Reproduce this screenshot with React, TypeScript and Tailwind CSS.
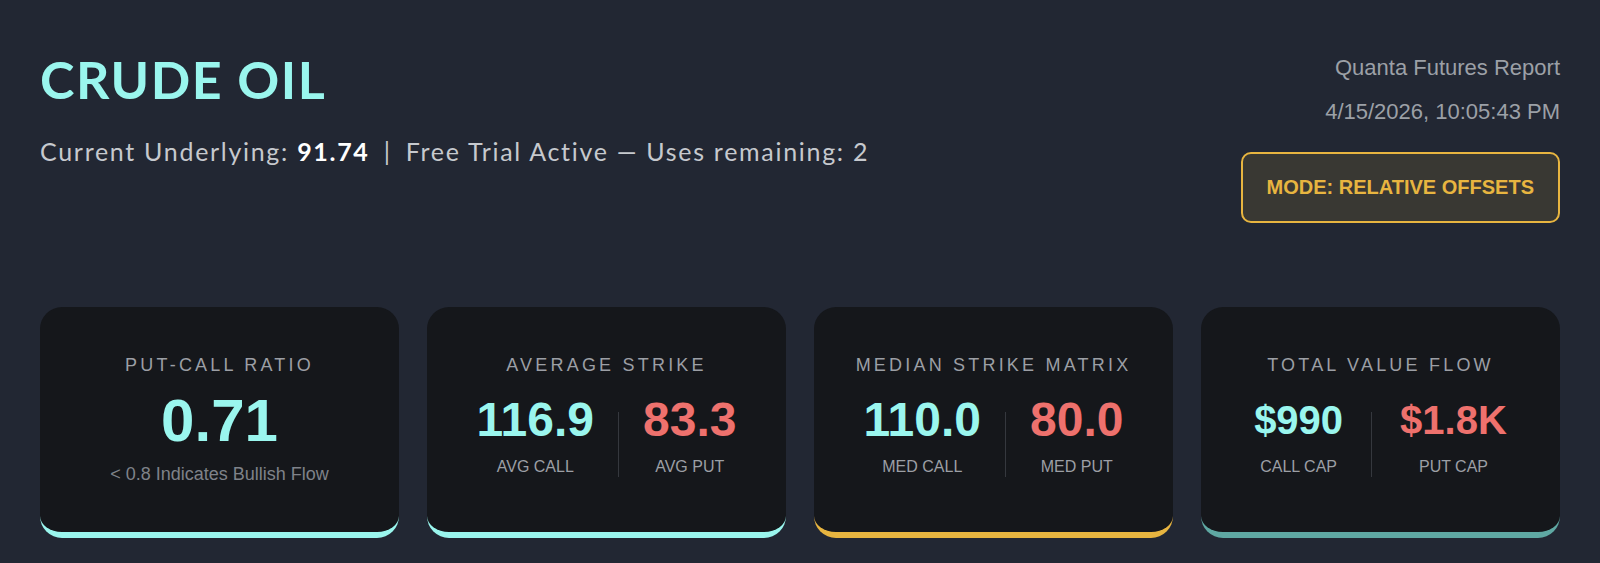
import React from "react";

const sans = { fontFamily: '"Liberation Sans", Arial, sans-serif' };
const geo = { fontFamily: 'Lato, "Noto Sans", sans-serif' };

function Label({ children }: { children: React.ReactNode }) {
  return (
    <div className="text-[18px] leading-[28px] tracking-[3.2px] text-[#9c9fa5] uppercase">
      {children}
    </div>
  );
}

function Col({
  value,
  label,
  color,
  small,
}: {
  value: string;
  label: string;
  color: string;
  small?: boolean;
}) {
  return (
    <div className="flex flex-col items-center">
      <div
        className={`${small ? "text-[40px] leading-[48px]" : "text-[48px] leading-none"} font-bold ${color}`}
      >
        {value}
      </div>
      <div className="text-[16px] leading-6 mt-[11px] text-[#9c9fa5]">{label}</div>
    </div>
  );
}

function SplitCard({
  title,
  left,
  right,
  border,
  small,
}: {
  title: string;
  left: [string, string];
  right: [string, string];
  border: string;
  small?: boolean;
}) {
  return (
    <div className={`rounded-[22px] bg-[#15171b] border-b-[6px] ${border} pt-11 pb-11 flex flex-col items-center`}>
      <Label>{title}</Label>
      <div className={`flex items-start ${small ? "gap-7" : "gap-6"} mt-[17px]`}>
        <Col value={left[0]} label={left[1]} color="text-[#9af6ee]" small={small} />
        <div className="w-px h-[65px] mt-4 bg-[#35383e]" />
        <Col value={right[0]} label={right[1]} color="text-[#ee716d]" small={small} />
      </div>
    </div>
  );
}

export default function App() {
  return (
    <div className="min-h-screen w-full bg-[#222733] px-10 pt-[51px] pb-6" style={sans}>
      <div className="flex justify-between items-start">
        <div className="pt-[2px]" style={geo}>
          <h1 className="text-[52px] leading-none font-bold text-[#9af6ee] tracking-[1.5px]">CRUDE OIL</h1>
          <div className="mt-[30px] text-[25px] leading-8 tracking-[1.7px] text-[#c6c9ce]">
            Current Underlying: <span className="font-bold text-white">91.74</span>
            <span className="mx-[6px]"> | </span>Free Trial Active — Uses remaining: 2
          </div>
        </div>
        <div className="flex flex-col items-end text-[22px] leading-[33px] text-[#9ca0a7]">
          <div>Quanta Futures Report</div>
          <div className="mt-[11px]">4/15/2026, 10:05:43 PM</div>
          <div className="mt-6 rounded-[10px] border-2 border-[#e8b540] bg-[#393833] px-6 py-[22px] text-[20px] leading-[23px] font-bold text-[#e8b540]">
            MODE: RELATIVE OFFSETS
          </div>
        </div>
      </div>

      <div className="mt-[84px] grid grid-cols-4 gap-7">
        <div className="rounded-[22px] bg-[#15171b] border-b-[6px] border-[#9af6ee] pt-11 pb-11 flex flex-col items-center">
          <Label>Put-Call Ratio</Label>
          <div className="mt-3 text-[60px] leading-none font-bold text-[#9af6ee]">0.71</div>
          <div className="mt-[9px] text-[18px] leading-[28px] text-[#7f8289]">&lt; 0.8 Indicates Bullish Flow</div>
        </div>
        <SplitCard
          title="Average Strike"
          left={["116.9", "AVG CALL"]}
          right={["83.3", "AVG PUT"]}
          border="border-[#9af6ee]"
        />
        <SplitCard
          title="Median Strike Matrix"
          left={["110.0", "MED CALL"]}
          right={["80.0", "MED PUT"]}
          border="border-[#e8b540]"
        />
        <SplitCard
          title="Total Value Flow"
          left={["$990", "CALL CAP"]}
          right={["$1.8K", "PUT CAP"]}
          border="border-[#5fa8a3]"
          small
        />
      </div>
    </div>
  );
}
